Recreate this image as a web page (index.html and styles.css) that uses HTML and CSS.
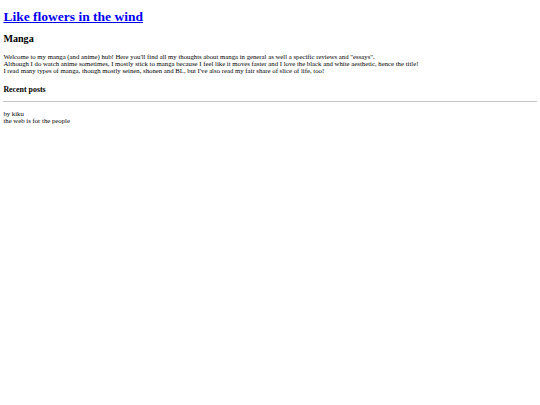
FILE: index.html
```html
<!DOCTYPE html>
<html>
<head>
<meta charset="utf-8">
<title>Like flowers in the wind</title>
<link rel="stylesheet" href="styles.css">
</head>
<body>
<h1 class="site-title"><a href="#">Like flowers in the wind</a></h1>
<h2 class="section-title">Manga</h2>
<p class="intro">Welcome to my manga (and anime) hub! Here you'll find all my thoughts about manga in general as well a specific reviews and "essays".<br>
Although I do watch anime sometimes, I mostly stick to manga because I feel like it moves faster and I love the black and white aesthetic, hence the title!<br>
I read many types of manga, though mostly seinen, shonen and BL, but I've also read my fair share of slice of life, too!</p>
<h3 class="recent">Recent posts</h3>
<hr class="rule">
<p class="footer">by kiku<br>the web is for the people</p>
</body>
</html>
```
FILE: styles.css
```css
body {
  margin: 3.4px;
  font-family: "Liberation Serif", "Times New Roman", serif;
  font-size: 6.75px;
  line-height: 7px;
  color: #000;
  background: #fff;
}
.site-title {
  font-size: 13.5px;
  line-height: 15.5px;
  margin: 6px 0 8px;
}
.site-title a {
  color: #0000ee;
}
.section-title {
  font-size: 10.1px;
  line-height: 11.6px;
  margin: 8px 0 8.4px;
}
.intro {
  margin: 8.4px 0 11px;
}
.recent {
  font-size: 7.9px;
  line-height: 9px;
  margin: 11px 0 7.5px;
}
.rule {
  border: none;
  border-top: 1px solid #c4c4c4;
  margin: 3.4px 0;
}
.footer {
  margin: 7.5px 0;
}
```
